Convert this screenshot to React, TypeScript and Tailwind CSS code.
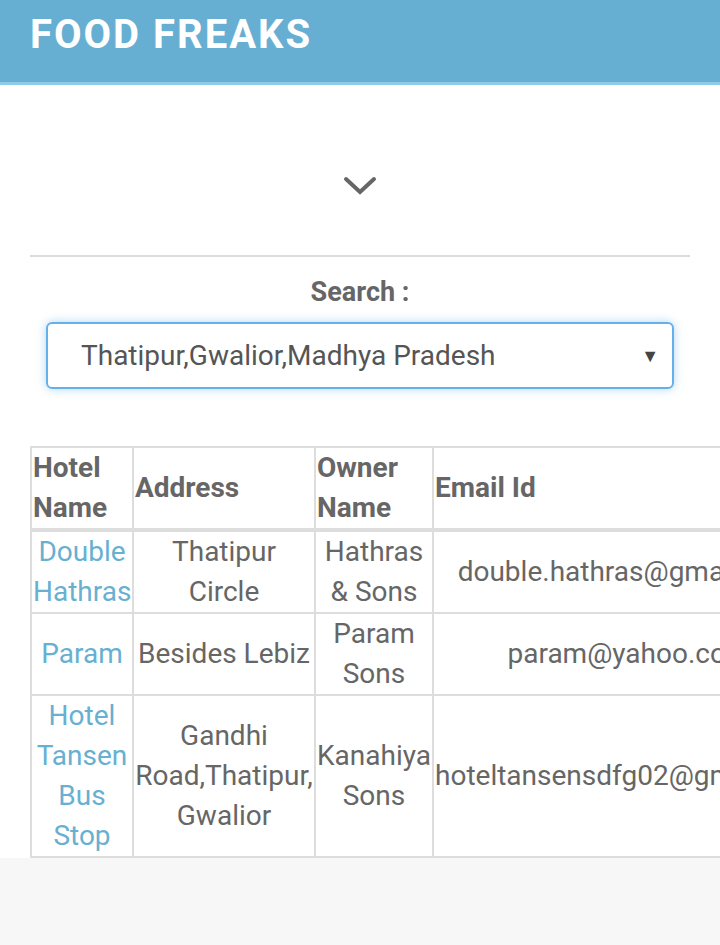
import React from "react";

const rows = [
  { name: "Double Hathras", addr: "Thatipur Circle", owner: "Hathras & Sons", email: "double.hathras@gmail.com" },
  { name: "Param", addr: "Besides Lebiz", owner: "Param Sons", email: "param@yahoo.com" },
  { name: "Hotel Tansen Bus Stop", addr: "Gandhi Road,Thatipur, Gwalior", owner: "Kanahiya Sons", email: "hoteltansensdfg02@gmail.com" },
];

export default function App() {
  return (
    <div className="w-[720px] h-[945px] overflow-hidden bg-[#f7f7f7]" style={{ fontFamily: "Roboto, 'Liberation Sans', sans-serif" }}>
      <div className="h-[85px] bg-[#67afd2] border-b-[3px] border-[#8ecbe6] px-[30px] pt-[12px]">
        <h1 className="text-[40px] leading-[46px] font-bold text-white tracking-[2px]">FOOD FREAKS</h1>
      </div>
      <div className="bg-white pt-[91px]">
        <div className="flex justify-center">
          <svg width="34" height="20" viewBox="0 0 34 20" fill="none">
            <path d="M3 3 L17 16 L31 3" stroke="#666" strokeWidth="4" strokeLinecap="round" strokeLinejoin="miter" />
          </svg>
        </div>
        <div className="mx-[30px] mt-[59px] border-t-2 border-[#ddd]" />
        <div className="text-center mt-[18px] text-[27px] leading-[34px] font-bold text-[#666]">Search :</div>
        <div className="mx-[46px] mt-[13px] h-[67px] rounded-[6px] border-2 border-[#66afe9] shadow-[0_0_10px_rgba(102,175,233,0.5)] flex items-center pl-[33px] pr-[13px]">
          <span className="flex-1 text-[28px] text-[#555]">Thatipur,Gwalior,Madhya Pradesh</span>
          <span className="text-[18px] text-[#444]">▼</span>
        </div>
        <div className="pl-[30px] pt-[57px]">
          <table className="border-collapse text-[28px] leading-[40px] text-[#666] w-[1100px] table-fixed">
            <colgroup>
              <col className="w-[102px]" />
              <col className="w-[182px]" />
              <col className="w-[118px]" />
              <col className="w-[392px]" />
              <col />
            </colgroup>
            <thead>
              <tr className="h-[81px]">
                {["Hotel Name", "Address", "Owner Name", "Email Id", ""].map((h, i) => (
                  <th key={i} className="border-2 border-[#ddd] border-b-4 px-[1px] py-0 text-left align-middle font-bold">{h}</th>
                ))}
              </tr>
            </thead>
            <tbody>
              {rows.map((r, i) => (
                <tr key={i}>
                  <td className="border-2 border-[#ddd] px-[1px] py-0 text-center align-middle text-[#67b0d1]">{r.name}</td>
                  <td className="border-2 border-[#ddd] px-[1px] py-0 text-center align-middle">{r.addr}</td>
                  <td className="border-2 border-[#ddd] px-[1px] py-0 text-center align-middle">{r.owner}</td>
                  <td className="border-2 border-[#ddd] px-[1px] py-0 text-center align-middle whitespace-nowrap">{r.email}</td>
                  <td className="border-2 border-[#ddd] px-[1px] py-0 text-center align-middle"></td>
                </tr>
              ))}
            </tbody>
          </table>
        </div>
      </div>
    </div>
  );
}
